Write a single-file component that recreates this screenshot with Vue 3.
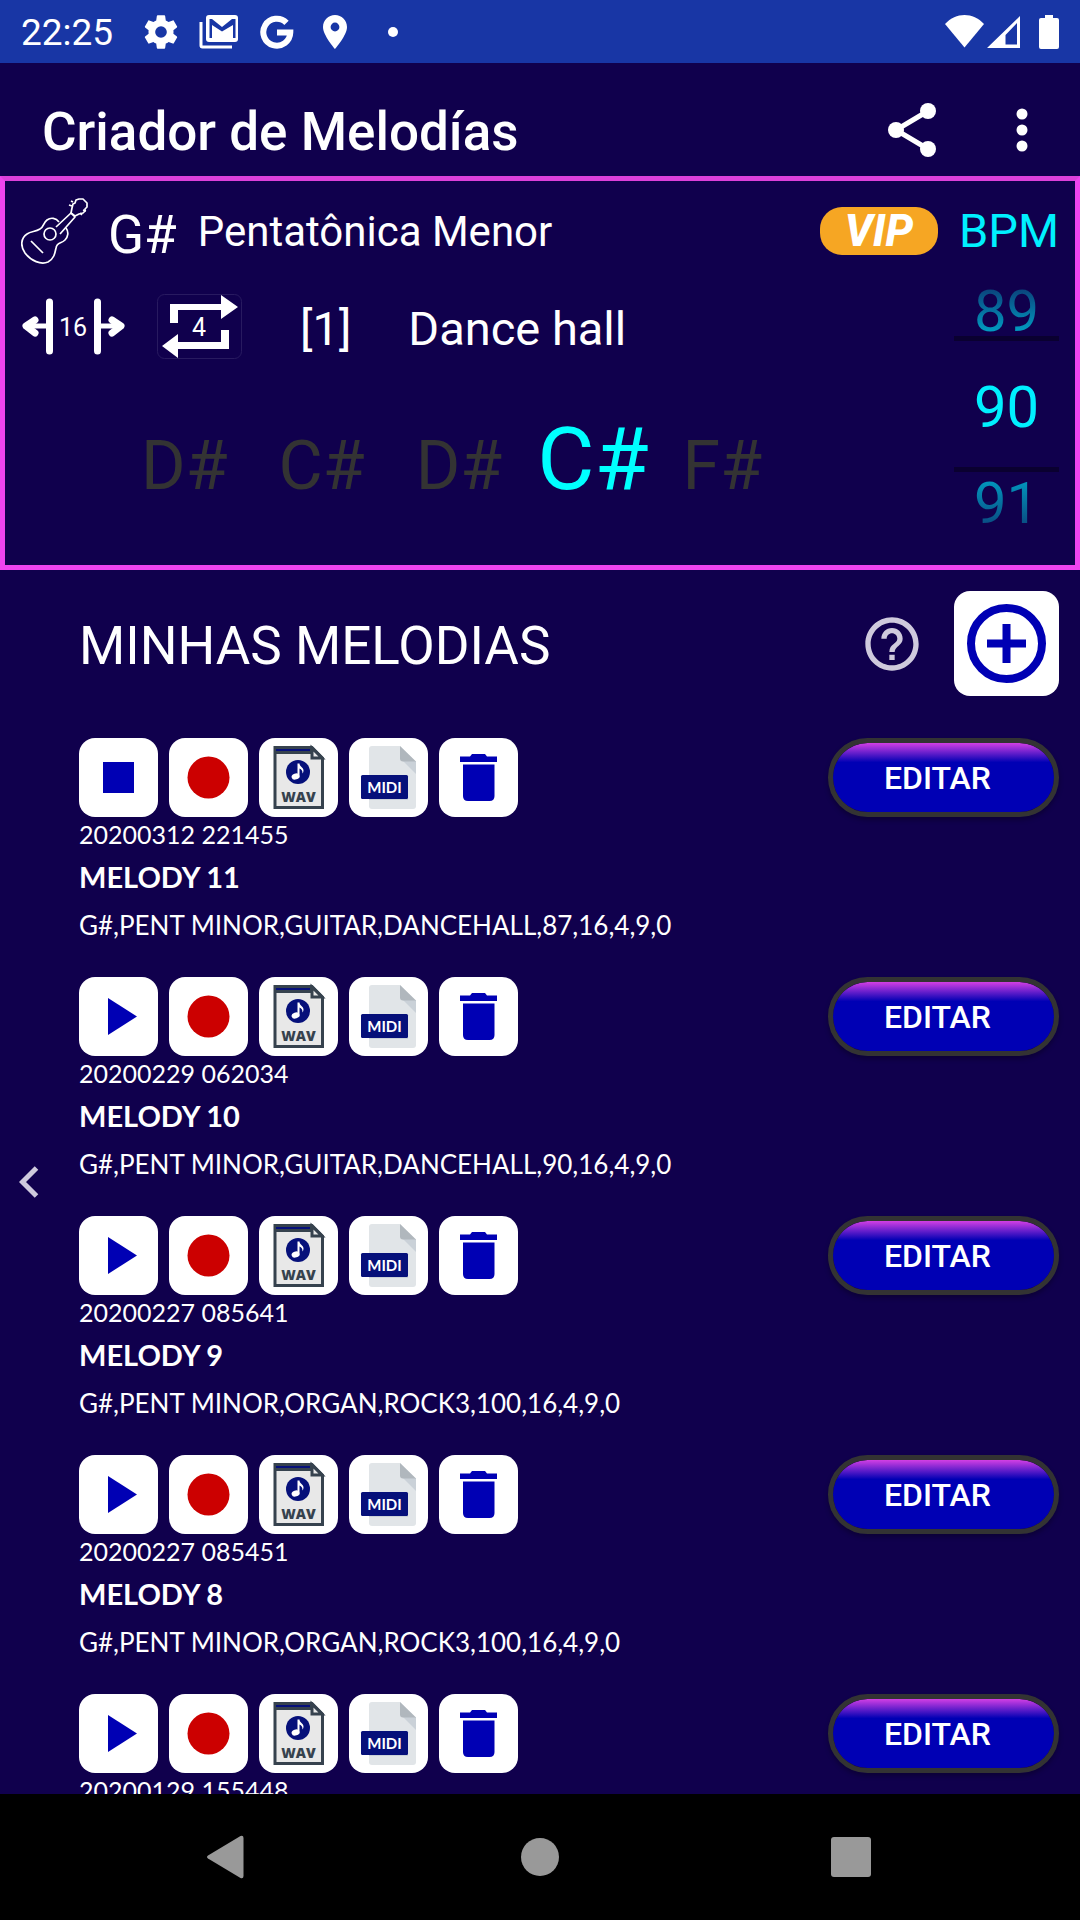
<script setup>
import { ref } from 'vue'

const bpm = ref(90)
const playingId = ref(11)

const notes = [
  { name: 'D#' },
  { name: 'C#' },
  { name: 'D#' },
  { name: 'C#', active: true },
  { name: 'F#' },
]

const melodies = [
  { id: 11, date: '20200312 221455', name: 'MELODY 11', info: 'G#,PENT MINOR,GUITAR,DANCEHALL,87,16,4,9,0' },
  { id: 10, date: '20200229 062034', name: 'MELODY 10', info: 'G#,PENT MINOR,GUITAR,DANCEHALL,90,16,4,9,0' },
  { id: 9, date: '20200227 085641', name: 'MELODY 9', info: 'G#,PENT MINOR,ORGAN,ROCK3,100,16,4,9,0' },
  { id: 8, date: '20200227 085451', name: 'MELODY 8', info: 'G#,PENT MINOR,ORGAN,ROCK3,100,16,4,9,0' },
  { id: 7, date: '20200129 155448' },
]

function toggle(id) {
  playingId.value = playingId.value === id ? null : id
}
</script>

<template>
  <div class="screen">
    <div class="status">
      <span class="clock">22:25</span>
      <div class="notifications">
        <svg width="40" height="40" viewBox="0 0 24 24" fill="#fff">
          <path d="M19.43 12.98c.04-.32.07-.64.07-.98s-.03-.66-.07-.98l2.11-1.65c.19-.15.24-.42.12-.64l-2-3.46c-.12-.22-.39-.3-.61-.22l-2.49 1c-.52-.4-1.08-.73-1.69-.98l-.38-2.65A.49.49 0 0 0 14 2h-4c-.25 0-.46.18-.49.42l-.38 2.65c-.61.25-1.17.59-1.69.98l-2.49-1c-.23-.09-.49 0-.61.22l-2 3.46c-.13.22-.07.49.12.64l2.11 1.65c-.04.32-.07.65-.07.98s.03.66.07.98l-2.11 1.65c-.19.15-.24.42-.12.64l2 3.46c.12.22.39.3.61.22l2.49-1c.52.4 1.08.73 1.69.98l.38 2.65c.03.24.24.42.49.42h4c.25 0 .46-.18.49-.42l.38-2.65c.61-.25 1.17-.59 1.69-.98l2.49 1c.23.09.49 0 .61-.22l2-3.46c.12-.22.07-.49-.12-.64l-2.11-1.65zM12 15.5a3.5 3.5 0 1 1 0-7 3.5 3.5 0 0 1 0 7z" />
        </svg>
        <svg width="40" height="34" viewBox="0 0 40 34">
          <path d="M2 7v23.500q0 1.500 1.500 1.500H33" fill="none" stroke="#fff" stroke-width="3" />
          <rect x="7" width="32" height="27" rx="3" fill="#fff" />
          <path d="M10.500 4H13l10 8 10-8h3.500v19H34V10l-11 6.500L13 10v13h-2.500z" fill="#1836a5" />
        </svg>
        <svg width="34" height="34" viewBox="0 0 34 34" fill="none" stroke="#fff" stroke-width="6">
          <path d="M26.500 7.800A13.500 13.500 0 1 0 30.300 17.500H17" />
        </svg>
        <svg width="24" height="34" viewBox="0 0 24 34" fill="#fff">
          <path fill-rule="evenodd" d="M12 0C5.400 0 0 5.300 0 12c0 8.500 12 22 12 22s12-13.500 12-22C24 5.300 18.600 0 12 0zm0 7.600a4.400 4.400 0 1 1 0 8.800 4.400 4.400 0 0 1 0-8.800z" />
        </svg>
        <svg width="10" height="10" viewBox="0 0 10 10" fill="#fff"><circle cx="5" cy="5" r="5" /></svg>
      </div>
      <svg class="radios" width="114" height="34" viewBox="0 0 114 34" fill="#fff">
        <path d="M0 9C11-3 28-3 39 9L19.500 32.500z" />
        <path fill-rule="evenodd" d="M75 1v32H42zM72 8L60.500 20v9.500H72z" />
        <path d="M94 3h6V0h8v3h4q2 0 2 2v27q0 2-2 2H96q-2 0-2-2V5q0-2 2-2z" />
      </svg>
    </div>

    <header class="app-bar">
      <h1>Criador de Melodías</h1>
      <button class="bar-button" aria-label="Compartilhar">
        <svg width="48" height="54" viewBox="0 0 48 54" fill="#fff">
          <path d="M40 8L8 27l32 19" fill="none" stroke="#fff" stroke-width="5" />
          <circle cx="40" cy="8" r="8" /><circle cx="8" cy="27" r="8" /><circle cx="40" cy="46" r="8" />
        </svg>
      </button>
      <button class="bar-button" aria-label="Mais opções">
        <svg width="12" height="44" viewBox="0 0 12 44" fill="#fff">
          <circle cx="6" cy="6" r="5.500" /><circle cx="6" cy="22" r="5.500" /><circle cx="6" cy="38" r="5.500" />
        </svg>
      </button>
    </header>

    <section class="panel">
      <div class="settings">
        <div class="scale-row">
          <svg width="68" height="67" viewBox="0 0 68 67" fill="none" stroke="#fff" stroke-width="1.700" stroke-linejoin="round">
            <path d="M35 29L50 15l4 4L39 36" />
            <path d="M50 15l1-5 1-4 2-1 1-3 3-1 4 0 4 4 0 4-2 2 0 2-2 2-4 1-4 2z" />
            <path d="M38 24c-3-4-8-5-12-2-4 3-3 7-7 9-5 3-9 2-13 5C0 40-1 48 4 55c6 8 16 12 23 9 6-3 7-9 8-14 1-6 5-4 9-8 3-3 4-8 1-12" />
            <circle cx="29" cy="36" r="6" />
            <path d="M10 43l12 12" />
            <path d="M52 4l-2-1M51 8l-3-1M62 12l3 1M59 15l2 2" />
          </svg>
          <span class="key">G#</span>
          <span class="scale">Pentatônica Menor</span>
          <button class="vip">VIP</button>
        </div>
        <div class="rhythm-row">
          <button aria-label="Compassos 16">
            <svg width="105" height="65" viewBox="0 0 105 65" fill="none" stroke="#fff" stroke-linecap="round" stroke-linejoin="round">
              <path d="M28.500 8v49M76.500 8v49" stroke-width="7" />
              <path d="M28 32H6M77 32h22" stroke-width="5" />
              <path d="M14 26l-9 6 9 7M91 26l9 6-9 7" stroke-width="7" />
              <text x="52" y="42" class="icon-number">16</text>
            </svg>
          </button>
          <button aria-label="Repetições 4">
            <svg width="85" height="65" viewBox="0 0 85 65" fill="#fff">
              <rect x=".5" y=".5" width="84" height="64" rx="7" fill="none" stroke="#281a60" />
              <path d="M13 29V10h51V1l17 12-17 12v-9H21v13z" />
              <path d="M72 36v19H21v9L5 52l16-12v8h43V36z" />
              <text x="42" y="42" class="icon-number">4</text>
            </svg>
          </button>
          <span class="variation">[1]</span>
          <span class="rhythm">Dance hall</span>
        </div>
        <div class="notes">
          <span v-for="(note, i) in notes" :key="i" class="note" :class="{ active: note.active }">{{ note.name }}</span>
        </div>
      </div>
      <div class="tempo">
        <label for="bpm">BPM</label>
        <button class="step prev" @click="bpm--">{{ bpm - 1 }}</button>
        <input id="bpm" v-model.number="bpm" type="text" inputmode="numeric">
        <button class="step next" @click="bpm++">{{ bpm + 1 }}</button>
      </div>
    </section>

    <main class="content">
      <div class="section-head">
        <h2>MINHAS MELODIAS</h2>
        <button class="help" aria-label="Ajuda">
          <svg width="64" height="64" viewBox="0 0 24 24" fill="#cfcadd">
            <path d="M11 18h2v-2h-2v2zm1-16C6.480 2 2 6.480 2 12s4.480 10 10 10 10-4.480 10-10S17.520 2 12 2zm0 18c-4.410 0-8-3.590-8-8s3.590-8 8-8 8 3.590 8 8-3.590 8-8 8zm0-14c-2.210 0-4 1.790-4 4h2c0-1.100.9-2 2-2s2 .9 2 2c0 2-3 1.750-3 5h2c0-2.250 3-2.500 3-5 0-2.210-1.790-4-4-4z" />
          </svg>
        </button>
        <button class="add" aria-label="Nova melodia">
          <svg width="79" height="79" viewBox="0 0 79 79" fill="none" stroke="#0000b4" stroke-width="8">
            <circle cx="39.500" cy="39.500" r="35.500" />
            <path d="M20 39.500h39M39.500 20v39" />
          </svg>
        </button>
      </div>

      <ul class="melodies">
        <li v-for="melody in melodies" :key="melody.id">
          <div class="actions">
            <button class="tile" :aria-label="melody.id === playingId ? 'Parar' : 'Tocar'" @click="toggle(melody.id)">
              <svg viewBox="0 0 79 79" fill="#0000b4">
                <rect v-if="melody.id === playingId" x="24" y="24" width="31" height="31" />
                <path v-else d="M29 21v37l29-18.500z" />
              </svg>
            </button>
            <button class="tile" aria-label="Gravar">
              <svg viewBox="0 0 79 79"><circle cx="39.500" cy="39.500" r="21" fill="#c00" /></svg>
            </button>
            <button class="tile" aria-label="Exportar WAV">
              <svg viewBox="0 0 79 79">
                <path d="M16 9.500h37L63.500 20v49.500H16z" fill="#e8e8e8" stroke="#36424e" stroke-width="3" />
                <path d="M15 9h38v7H15z" fill="#36424e" />
                <path d="M17 11h34v2H17z" fill="#06107a" />
                <path d="M53 10v10h10z" fill="#e8e8e8" stroke="#36424e" stroke-width="3" />
                <circle cx="39" cy="34" r="12" fill="#06107a" />
                <ellipse cx="36.500" cy="38.500" rx="4" ry="3" fill="#fff" transform="rotate(-20 36.500 38.500)" />
                <path d="M38.500 25.500h2c0 3 4 4 4 7 0 2-1 3-1 3 0-3-1-4-3-5v9h-2z" fill="#fff" />
                <text x="39.500" y="64" class="wav-text">WAV</text>
              </svg>
            </button>
            <button class="tile" aria-label="Exportar MIDI">
              <svg viewBox="0 0 79 79">
                <path d="M23 8h28l16 16v44q0 3-3 3H23q-3 0-3-3V11q0-3 3-3z" fill="#e1e5e8" />
                <path d="M54 23l13 13V23z" fill="#cad1d8" />
                <path d="M51 8l16 15.500H54q-3 0-3-3z" fill="#b0b7bd" />
                <path d="M20 60h39v2H20z" fill="#cad1d8" />
                <rect x="12" y="37" width="47" height="24" rx="1.500" fill="#06107a" />
                <text x="35.500" y="55" class="midi-text">MIDI</text>
              </svg>
            </button>
            <button class="tile" aria-label="Excluir">
              <svg viewBox="0 0 79 79" fill="#0000b4">
                <path d="M21 18.500h10l2-2.500h13l2 2.500h10V24H21z" />
                <path d="M24 26.500h31.500V58q0 5-5 5H29q-5 0-5-5z" />
              </svg>
            </button>
            <button class="edit">EDITAR</button>
          </div>
          <div class="date">{{ melody.date }}</div>
          <div v-if="melody.name" class="name">{{ melody.name }}</div>
          <div v-if="melody.info" class="info">{{ melody.info }}</div>
        </li>
      </ul>

      <button class="drawer" aria-label="Anterior">
        <svg width="20" height="32" viewBox="0 0 20 32" fill="none" stroke="#cfcadd" stroke-width="5"><path d="M17.500 2L3.500 16l14 14" /></svg>
      </button>
    </main>

    <nav class="nav-bar">
      <button aria-label="Voltar">
        <svg width="44" height="44" viewBox="0 0 44 44" fill="#999"><path d="M1 20.500L33.500 1q3-1 3 2v38q0 3-3 2L1 23.500q-2-1.500 0-3z" /></svg>
      </button>
      <button aria-label="Início">
        <svg width="44" height="44" viewBox="0 0 44 44" fill="#999"><circle cx="22" cy="22" r="19" /></svg>
      </button>
      <button aria-label="Recentes">
        <svg width="44" height="44" viewBox="0 0 44 44" fill="#999"><rect x="2" y="2" width="40" height="40" rx="3" /></svg>
      </button>
    </nav>
  </div>
</template>

<style>
body {
  margin: 0;
  background: #10004d;
}
</style>

<style scoped>
.screen {
  display: flex;
  flex-direction: column;
  height: 100vh;
  background: #10004d;
  color: #fff;
  font-family: Roboto, sans-serif;
}
button {
  padding: 0;
  border: 0;
  background: none;
  color: inherit;
  font-family: inherit;
  cursor: pointer;
}
svg {
  display: block;
}
h1,
h2 {
  margin: 0;
  flex: 1;
  font-size: 53px;
  line-height: 64px;
}
.status {
  display: flex;
  align-items: center;
  flex: none;
  height: 63px;
  padding: 0 21px;
  background: #1836a5;
}
.clock {
  width: 111px;
  padding-top: 2px;
  box-sizing: border-box;
  font-size: 37px;
}
.notifications {
  display: grid;
  grid-template-columns: repeat(5, 58px);
  place-items: center;
}
.radios {
  margin-left: auto;
}
.app-bar {
  display: flex;
  align-items: center;
  flex: none;
  gap: 80px;
  height: 113px;
  padding: 0 52px 0 42px;
  box-sizing: border-box;
}
h1 {
  padding-top: 24px;
  font-weight: 500;
}
.bar-button {
  padding-top: 20px;
}
.panel {
  display: flex;
  flex: none;
  gap: 16px;
  height: 394px;
  padding: 0 16px;
  box-sizing: border-box;
  border: 5px solid #ee44ee;
  border-top-color: #dc40da;
}
.settings {
  flex: 1;
}
.scale-row {
  display: flex;
  align-items: center;
  height: 100px;
}
.key {
  padding: 8px 0 0 19px;
  font-size: 53px;
}
.scale {
  flex: 1;
  padding-left: 21px;
  font-size: 42px;
}
.vip {
  width: 118px;
  height: 48px;
  border-radius: 22px;
  background: #f6a623;
  font-size: 44px;
  line-height: 48px;
  font-weight: 800;
  font-style: italic;
}
.rhythm-row {
  display: flex;
  align-items: center;
  height: 66px;
  margin-top: 12px;
}
.rhythm-row button + button {
  margin-left: 31px;
}
.icon-number {
  fill: #fff;
  stroke: none;
  font-size: 25px;
  text-anchor: middle;
}
.variation {
  padding: 4px 0 0 58px;
  font-size: 47px;
}
.rhythm {
  padding: 4px 0 0 57px;
  font-size: 47px;
}
.notes {
  display: flex;
  align-items: baseline;
  padding: 48px 0 0 120px;
  gap: 51px;
}
.note {
  color: #333;
  font-size: 68px;
}
.note.active {
  margin: 0 -17px 0 -16px;
  color: #0ff;
  font-size: 88px;
}
.tempo {
  display: flex;
  flex-direction: column;
  width: 105px;
  color: #00f0ff;
  font-size: 58px;
}
.tempo label {
  height: 105px;
  font-size: 47px;
  line-height: 100px;
  text-align: right;
}
.step {
  width: 100%;
  font-size: 58px;
  color: transparent;
  background-clip: text;
}
.prev {
  line-height: 50px;
  background-image: linear-gradient(#0b3d77, #00a5c8);
}
.next {
  line-height: 62px;
  background-image: linear-gradient(#00a5c8, #0b3d77);
}
.tempo input {
  width: 100%;
  height: 136px;
  padding: 6px 0 0;
  box-sizing: border-box;
  border: solid #0a0030;
  border-width: 5px 0;
  background: none;
  color: inherit;
  font: inherit;
  text-align: center;
}
.content {
  position: relative;
  flex: 1;
  min-height: 0;
  padding: 21px 21px 0 79px;
  overflow: hidden;
}
.section-head {
  display: flex;
  align-items: center;
  gap: 30px;
}
h2 {
  padding-top: 4px;
  font-weight: 400;
}
.add {
  display: grid;
  place-items: center;
  width: 105px;
  height: 105px;
  border-radius: 16px;
  background: #fff;
}
.melodies {
  margin: 42px 0 0;
  padding: 0;
  list-style: none;
}
.melodies li {
  height: 239px;
}
.actions {
  display: flex;
  gap: 11px;
}
.tile {
  width: 79px;
  height: 79px;
  border-radius: 16px;
  background: #fff;
}
.wav-text {
  fill: #36424e;
  font-family: "Open Sans", sans-serif;
  font-size: 14px;
  font-weight: 800;
  text-anchor: middle;
}
.midi-text {
  fill: #fff;
  font-family: Lato, sans-serif;
  font-size: 15px;
  font-weight: 700;
  text-anchor: middle;
}
.edit {
  width: 231px;
  height: 79px;
  margin-left: auto;
  padding-right: 12px;
  border: 5px solid #333;
  border-radius: 40px;
  background: linear-gradient(#d23fe4, #0000b4 28%) padding-box;
  box-shadow: 0 3px 5px rgba(0, 0, 0, 0.3);
  font-size: 32px;
  font-weight: 500;
}
.date,
.name,
.info {
  font-family: Lato, sans-serif;
  white-space: nowrap;
}
.date {
  font-size: 25px;
  line-height: 34px;
}
.name {
  font-size: 29px;
  line-height: 52px;
  font-weight: 700;
}
.info {
  font-size: 26px;
  line-height: 44px;
}
.drawer {
  position: absolute;
  top: 50%;
  left: 19px;
  transform: translateY(-50%);
}
.nav-bar {
  display: grid;
  grid-template-columns: repeat(3, 1fr);
  flex: none;
  height: 126px;
  padding: 0 73px;
  background: #000;
}
.nav-bar button {
  display: grid;
  place-items: center;
}
</style>
